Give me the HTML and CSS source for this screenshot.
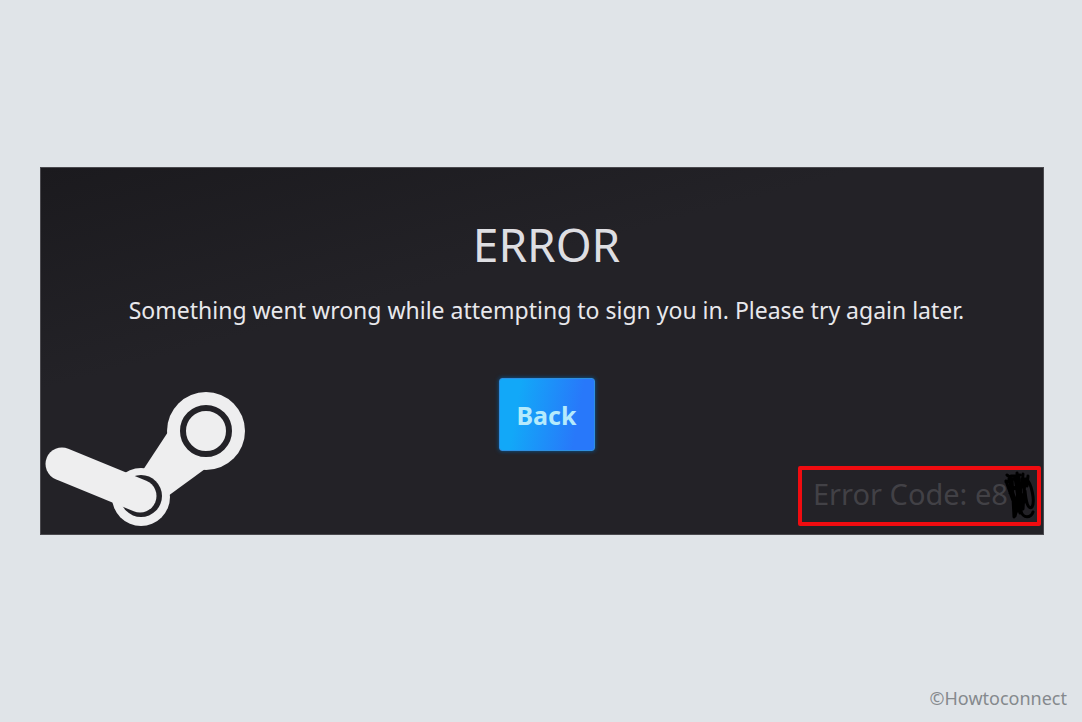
FILE: index.html
```html
<!DOCTYPE html>
<html lang="en">
<head>
<meta charset="utf-8">
<title>Error</title>
<link rel="stylesheet" href="styles.css">
</head>
<body>
<main class="panel">
  <section class="message">
    <h1 class="title">ERROR</h1>
    <p class="text">Something went wrong while attempting to sign you in. Please try again later.</p>
    <button class="back" type="button">Back</button>
  </section>
  <div class="bottom">
    <svg class="logo" viewBox="0 0 200 134" role="img" aria-label="Steam">
      <g fill="#eeeeef">
        <circle cx="161" cy="39" r="39"/>
        <circle cx="96" cy="105" r="29"/>
        <path d="M123 40L98 78L96 105L123 104L160 77Z"/>
      </g>
      <circle cx="161" cy="39" r="23" fill="none" stroke="#232227" stroke-width="6"/>
      <circle cx="96" cy="104" r="21" fill="#232227"/>
      <path d="M17 72L95 104" fill="none" stroke="#eeeeef" stroke-width="33" stroke-linecap="round"/>
    </svg>
    <p class="code">Error Code: e8
      <svg class="scribble" viewBox="0 0 34 50" aria-hidden="true">
        <path d="M4 4L8 7M8 5L17 4M3 11L11 8M14 2L15 12M20 3L19 16M25 5L24 15M3 10L13 38M6 8L15 40M9 7L11 46M12 6L17 42M16 6L13 39M19 8L16 34M22 8L20 38M7 22L16 12M23 8C29 12 32 31 29 36C25 39 23 31 22 20M12 45L18 23L18 40C20 48 28 47 30 41M11 41L22 30M20 27L24 32" fill="none" stroke="#000" stroke-width="3" stroke-linecap="round" stroke-linejoin="round"/>
      </svg>
    </p>
  </div>
</main>
<footer class="credit">©Howtoconnect</footer>
</body>
</html>
```
FILE: styles.css
```css
* { box-sizing: border-box; }
body {
  display: flex;
  flex-direction: column;
  min-height: 100vh;
  margin: 0;
  padding: 167px 38px 0 40px;
  background: #e0e4e8;
  font-family: "Noto Sans", sans-serif;
}
.panel {
  display: grid;
  border: 1px solid #4a494e;
  background: linear-gradient(165deg, #1b1a1e, #232227 35%);
}
.message, .bottom { grid-area: 1 / 1; }
.message {
  display: flex;
  flex-direction: column;
  align-items: center;
  padding: 45px 0 83px 9px;
}
.title {
  margin: 0;
  color: #dedee2;
  font-size: 46px;
  font-weight: 400;
  line-height: 62px;
}
.text {
  margin: 18px 0 51px;
  color: #e8e8ec;
  font-size: 23px;
  font-weight: 400;
  line-height: 34px;
}
.back {
  width: 96px;
  height: 73px;
  border: 1px solid #2f8fe0;
  border-radius: 3px;
  background: linear-gradient(100deg, #12a8f8 20%, #2878fa 80%);
  box-shadow: 0 0 4px #075a9a;
  color: #b5eafc;
  font: 700 25px "Noto Sans", sans-serif;
}
.bottom {
  display: flex;
  align-items: flex-end;
  justify-content: space-between;
  align-self: end;
  padding: 0 2px 8px 4px;
  pointer-events: none;
}
.logo { width: 200px; height: 134px; }
.code {
  position: relative;
  width: 243px;
  margin: 0;
  padding: 4px 11px 8px;
  border: 4px solid #f00c10;
  border-radius: 2px;
  color: #424146;
  font-size: 29px;
  line-height: 40px;
  white-space: nowrap;
}
.scribble {
  position: absolute;
  right: 0;
  top: 1px;
  width: 34px;
  height: 50px;
}
.credit {
  margin: auto -23px 11px auto;
  color: #85898d;
  font-size: 18px;
  font-weight: 400;
  line-height: 26px;
}
```
